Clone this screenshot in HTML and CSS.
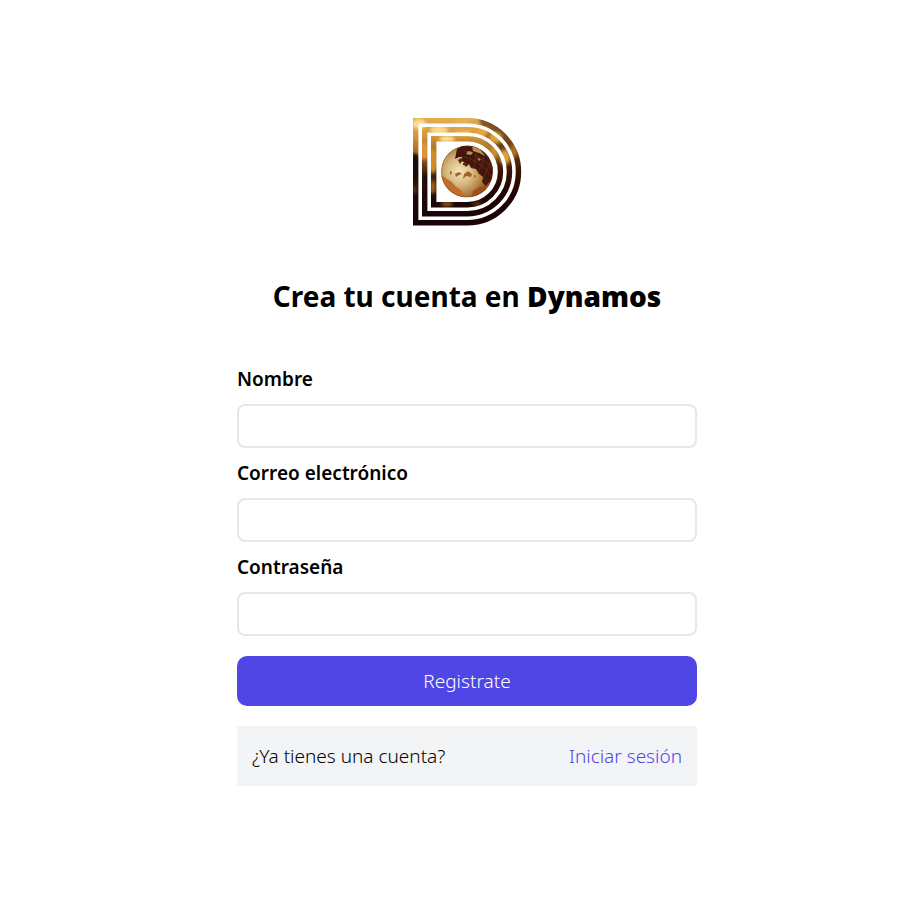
FILE: index.html
```html
<!DOCTYPE html>
<html lang="es">
<head>
<meta charset="utf-8">
<meta name="viewport" content="width=device-width, initial-scale=1">
<title>Dynamos</title>
<link rel="stylesheet" href="styles.css">
</head>
<body>
<main class="page">
  <section class="signup">
    <svg class="logo" viewBox="0 0 124 124" role="img" aria-label="Dynamos">
      <defs>
        <linearGradient id="gold" x1="0" y1="0" x2="0" y2="1">
          <stop offset="0.06" stop-color="#e3ad50"/>
          <stop offset="0.2" stop-color="#d69a3b"/>
          <stop offset="0.34" stop-color="#a36c28"/>
          <stop offset="0.5" stop-color="#4d270a"/>
          <stop offset="0.66" stop-color="#200a08"/>
          <stop offset="1" stop-color="#130209"/>
        </linearGradient>
        <radialGradient id="sphere" cx="0.36" cy="0.5" r="0.65">
          <stop offset="0" stop-color="#f5e6bd"/>
          <stop offset="0.4" stop-color="#d6b880"/>
          <stop offset="0.75" stop-color="#a87434"/>
          <stop offset="1" stop-color="#633009"/>
        </radialGradient>
        <filter id="soft" x="-40%" y="-40%" width="180%" height="180%"><feGaussianBlur stdDeviation="1.8"/></filter>
        <filter id="fine"><feGaussianBlur stdDeviation="0.4"/></filter>
        <mask id="bands" maskUnits="userSpaceOnUse" x="0" y="0" width="124" height="124">
          <g fill="none" stroke="#fff" stroke-width="5.4">
            <path d="M10.7 10.7H62.5A51 51 0 0 1 62.5 112.7H10.7Z"/>
            <path d="M19.7 19.7H62.5A42 42 0 0 1 62.5 103.7H19.7Z"/>
            <path d="M28.7 28.7H62.5A33 33 0 0 1 62.5 94.7H28.7Z"/>
          </g>
        </mask>
        <clipPath id="globe"><circle cx="62" cy="61.5" r="26"/></clipPath>
      </defs>
      <g mask="url(#bands)">
        <rect width="124" height="124" fill="url(#gold)"/>
        <g filter="url(#soft)">
          <path d="M72 4L124 4V124H65V92L91 65L94 44L82 31Z" fill="#210b06" opacity="0.5"/>
          <ellipse cx="14" cy="14" rx="7" ry="5" fill="#ffdc91"/>
          <ellipse cx="34" cy="20" rx="9" ry="4" fill="#ffd987"/>
          <ellipse cx="57" cy="12" rx="8" ry="4" fill="#e5b155"/>
          <ellipse cx="58" cy="23" rx="9" ry="4" fill="#e9af4b"/>
          <ellipse cx="42" cy="29" rx="8" ry="3" fill="#ffe19d"/>
          <ellipse cx="77" cy="22" rx="6" ry="4" fill="#e7a83f"/>
          <ellipse cx="90" cy="28" rx="6" ry="5" fill="#e1a13b"/>
          <ellipse cx="100" cy="47" rx="5" ry="7" fill="#dda03c"/>
          <ellipse cx="89" cy="42" rx="4" ry="6" fill="#d18d2e"/>
          <ellipse cx="109" cy="41" rx="3" ry="6" fill="#b16e1d"/>
          <ellipse cx="28" cy="51" rx="5" ry="12" fill="#d28d2a"/>
          <ellipse cx="19" cy="41" rx="5" ry="9" fill="#d7973a"/>
          <ellipse cx="28" cy="77" rx="3" ry="7" fill="#9b601b"/>
          <ellipse cx="10" cy="80" rx="2" ry="4" fill="#5d330d"/>
          <ellipse cx="42" cy="94" rx="6" ry="3" fill="#7a4712"/>
          <ellipse cx="72" cy="94" rx="5" ry="3" fill="#4d280b"/>
          <path d="M5 44H15V72H5ZM17 64H23V76H17Z" fill="#1d0807"/>
        </g>
      </g>
      <g clip-path="url(#globe)">
        <circle cx="62" cy="61.5" r="26" fill="url(#sphere)"/>
        <g filter="url(#fine)">
          <path d="M52 39L57 36L67 35L77 40L84 47L88 57L87 69L81 76L77 72L78 67L74 64L71 59L66 58L64 54L61 57L59 52L56 51L57 47L54 47L50 49Z" fill="#421407"/>
          <path d="M53 50L56 48L57 51L55 54ZM58 53L62 53L61 56L58 55Z" fill="#5a250d"/>
          <path d="M67 36L75 39L80 46L74 43L68 41ZM63 41L68 42L66 45L61 44ZM72 48L76 49L74 51Z" fill="#b99159"/>
          <path d="M45 61L47 62L46 65L45 64ZM50 64L54 62L57 64L54 65L51 67ZM59 64L63 61L67 64L66 67L61 66L58 69ZM69 65L71 66L69 68Z" fill="#a56120"/>
          <path d="M36 65L42 69L47 72L50 76L56 80L58 85L61 89L46 88L37 76Z" fill="#bd702a"/>
          <path d="M68 81L74 77L81 76L86 70L85 83L74 88L67 86Z" fill="#a14d20"/>
        </g>
        <g fill="none" stroke="#bc7739" stroke-width="0.45" opacity="0.5">
          <path d="M56 47Q72 47 86 66M59 41Q76 45 89 60M62 55Q74 60 82 73"/>
          <path d="M73 37Q70 50 68 61M80 43Q77 56 72 64M86 50Q82 62 77 70"/>
        </g>
        <circle cx="62" cy="61.5" r="25.6" fill="none" stroke="#75431a" stroke-width="0.8" opacity="0.6"/>
      </g>
    </svg>
    <h1 class="title">Crea tu cuenta en <strong class="brand">Dynamos</strong></h1>
    <form class="form">
      <div class="field">
        <label class="label" for="name">Nombre</label>
        <input class="input" id="name" name="name" type="text">
      </div>
      <div class="field">
        <label class="label" for="email">Correo electrónico</label>
        <input class="input" id="email" name="email" type="email">
      </div>
      <div class="field">
        <label class="label" for="password">Contraseña</label>
        <input class="input" id="password" name="password" type="password">
      </div>
      <button class="submit" type="submit">Registrate</button>
    </form>
    <div class="login">
      <span>¿Ya tienes una cuenta?</span>
      <a class="link" href="#login">Iniciar sesión</a>
    </div>
  </section>
</main>
</body>
</html>
```
FILE: styles.css
```css
* {
  box-sizing: border-box;
}

body {
  margin: 0;
  background: #fff;
  color: #000;
  font: 350 19px/30px "Noto Sans", "Open Sans", sans-serif;
}

.page {
  display: flex;
  justify-content: center;
  min-height: 100vh;
  padding: 110px 0 40px 29px;
}

.signup {
  display: flex;
  flex-direction: column;
  width: 100%;
  max-width: 460px;
}

.logo {
  width: 124px;
  align-self: center;
}

.title {
  margin: 40px 0 46px;
  font-size: 28px;
  line-height: 44px;
  font-weight: 700;
  text-align: center;
}

.brand {
  font-weight: 900;
}

.form {
  display: flex;
  flex-direction: column;
}

.field {
  display: flex;
  flex-direction: column;
  gap: 10px;
  margin-bottom: 10px;
}

.label {
  font-weight: 600;
}

.input {
  width: 100%;
  height: 44px;
  padding: 8px 12px;
  border: 2px solid #e5e7eb;
  border-radius: 8px;
  background: #fff;
  font: inherit;
}

.submit {
  height: 50px;
  margin-top: 10px;
  border: 0;
  border-radius: 10px;
  background: #4f46e5;
  color: #fff;
  font: inherit;
  cursor: pointer;
}

.login {
  display: flex;
  align-items: center;
  justify-content: space-between;
  margin-top: 20px;
  padding: 15px;
  background: #f3f4f6;
}

.link {
  color: #4f46e5;
  text-decoration: none;
}
```
